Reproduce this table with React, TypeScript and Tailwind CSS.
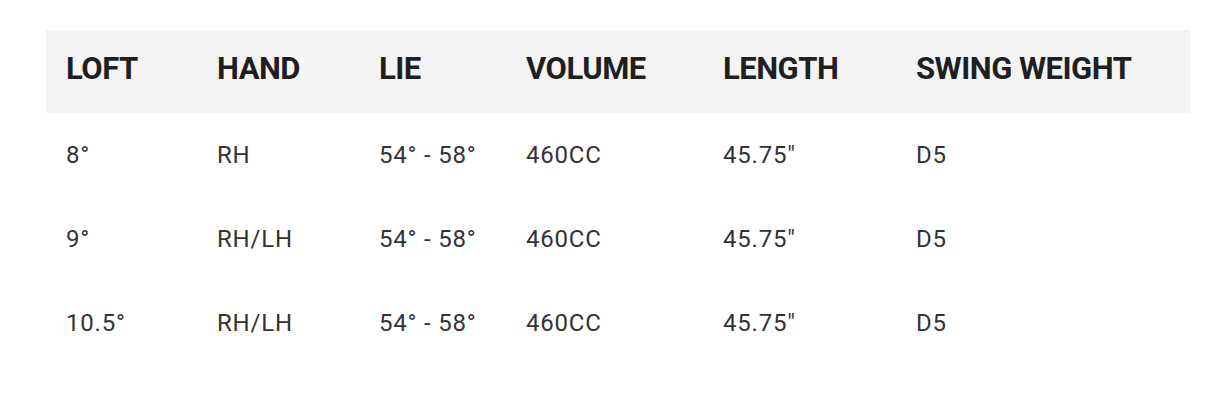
import * as React from "react";

const headers = ["LOFT", "HAND", "LIE", "VOLUME", "LENGTH", "SWING WEIGHT"];

const rows = [
  ["8°", "RH", "54° - 58°", "460CC", '45.75"', "D5"],
  ["9°", "RH/LH", "54° - 58°", "460CC", '45.75"', "D5"],
  ["10.5°", "RH/LH", "54° - 58°", "460CC", '45.75"', "D5"],
];

const cols = "grid grid-cols-[151px_162px_147px_197px_193px_1fr] px-5 items-center";

export default function App() {
  return (
    <div className="min-h-[402px] w-[1228px] bg-white pt-[30px] pl-[46px] font-['Roboto',sans-serif]">
      <div className="w-[1144px]">
        <div className={`${cols} h-[83px] bg-[#f4f4f4] pb-[4px]`}>
          {headers.map((h) => (
            <div key={h} className="text-[31px] font-bold tracking-[-0.5px] text-[#1f1f1f]">
              {h}
            </div>
          ))}
        </div>
        {rows.map((row, i) => (
          <div key={i} className={`${cols} h-[84px]`}>
            {row.map((cell, j) => (
              <div key={j} className="text-[24px] tracking-[0.8px] text-[#333]">
                {cell}
              </div>
            ))}
          </div>
        ))}
      </div>
    </div>
  );
}
